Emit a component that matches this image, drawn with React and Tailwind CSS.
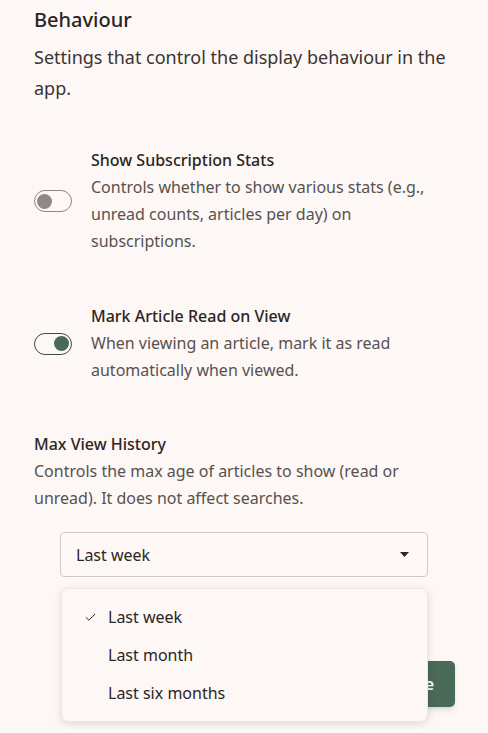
import { Check } from "lucide-react";

const font = { fontFamily: '"Noto Sans", "Liberation Sans", sans-serif' };

function Toggle({ on }) {
  return (
    <div
      className={
        "w-[38px] h-[22px] shrink-0 rounded-full border-[1.5px] flex items-center px-[2px] " +
        (on ? "border-[#3f4a44] justify-end" : "border-[#8c8583] justify-start")
      }
    >
      <div className={"w-[15px] h-[15px] rounded-full " + (on ? "bg-[#4a6a58]" : "bg-[#8f8886]")} />
    </div>
  );
}

function SettingRow({ title, desc, on }) {
  return (
    <div className="flex items-center gap-[19px]">
      <Toggle on={on} />
      <div className="flex flex-col">
        <div className="text-[16px] leading-[27px] font-medium text-[#2b2523]">{title}</div>
        <div className="text-[16px] leading-[27px] text-[#58514f]">{desc}</div>
      </div>
    </div>
  );
}

export default function App() {
  const options = ["Last week", "Last month", "Last six months"];
  return (
    <div style={font} className="min-h-screen bg-[#fdf8f6] px-[34px] pt-[6px] pb-6 text-[#2b2523]">
      <h2 className="text-[20px] leading-[28px] font-medium">Behaviour</h2>
      <p className="mt-[8px] text-[18px] leading-[31px] text-[#3a3432] pr-2">
        Settings that control the display behaviour in the app.
      </p>

      <div className="mt-[43px] flex flex-col gap-[48px]">
        <SettingRow
          title="Show Subscription Stats"
          desc="Controls whether to show various stats (e.g., unread counts, articles per day) on subscriptions."
        />
        <SettingRow
          on
          title="Mark Article Read on View"
          desc="When viewing an article, mark it as read automatically when viewed."
        />
      </div>

      <div className="mt-[47px]">
        <div className="text-[16px] leading-[27px] font-medium">Max View History</div>
        <div className="text-[16px] leading-[27px] text-[#58514f]">
          Controls the max age of articles to show (read or unread). It does not affect searches.
        </div>
      </div>

      <div className="relative ml-[26px] mt-[20px] w-[368px]">
        <div className="h-[45px] rounded-[4px] border border-[#d2cac8] flex items-center justify-between pl-[15px] pr-[18px]">
          <span className="text-[16px]">Last week</span>
          <svg width="9" height="5" viewBox="0 0 9 5">
            <path d="M0 0h9L4.5 5z" fill="#2b2523" />
          </svg>
        </div>

        <div className="flex justify-end mr-[-27px] mt-[84px]">
          <button className="h-[46px] px-[21px] rounded-[5px] bg-[#4a6a58] text-white text-[16px] font-semibold shadow-md">
            Save
          </button>
        </div>

        <div className="absolute left-[1px] right-0 top-[56px] z-10 rounded-[7px] border border-[#ede6e4] bg-[#fdf8f6] shadow-[0_2px_8px_rgba(0,0,0,0.12)] py-[9px]">
          {options.map((o, i) => (
            <div key={o} className="h-[38px] flex items-center">
              <div className="w-[46px] flex justify-end pr-[11px]">
                {i === 0 && <Check size={13} strokeWidth={1.8} className="text-[#2b2523]" />}
              </div>
              <span className="text-[16px]">{o}</span>
            </div>
          ))}
        </div>
      </div>
    </div>
  );
}
